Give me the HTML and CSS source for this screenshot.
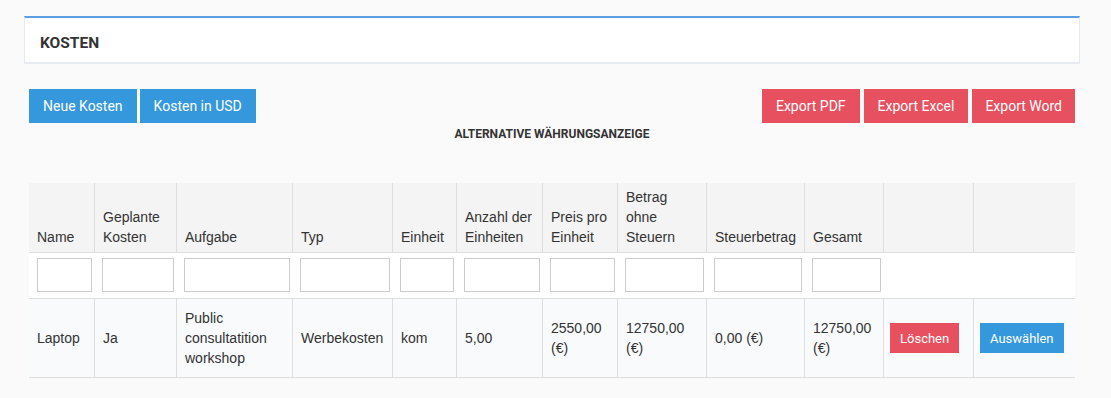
FILE: index.html
```html
<!DOCTYPE html>
<html lang="de">
<head>
<meta charset="utf-8">
<title>Kosten</title>
<link rel="stylesheet" href="styles.css">
</head>
<body>
<div class="page">
  <div class="card">
    <h2 class="card-title">KOSTEN</h2>
  </div>
  <div class="content">
    <div class="toolbar">
      <div class="btn-group">
        <button class="btn btn-blue">Neue Kosten</button>
        <button class="btn btn-blue">Kosten in USD</button>
      </div>
      <div class="btn-group btn-group-right">
        <button class="btn btn-red">Export PDF</button>
        <button class="btn btn-red">Export Excel</button>
        <button class="btn btn-red btn-narrow">Export Word</button>
      </div>
    </div>
    <div class="alt-label">ALTERNATIVE WÄHRUNGSANZEIGE</div>
    <table class="grid">
      <colgroup>
        <col class="c1"><col class="c2"><col class="c3"><col class="c4"><col class="c5"><col class="c6">
        <col class="c7"><col class="c8"><col class="c9"><col class="c10"><col class="c11"><col class="c12">
      </colgroup>
      <thead>
        <tr class="head-row">
          <th>Name</th>
          <th>Geplante Kosten</th>
          <th>Aufgabe</th>
          <th>Typ</th>
          <th>Einheit</th>
          <th>Anzahl der Einheiten</th>
          <th>Preis pro Einheit</th>
          <th>Betrag ohne Steuern</th>
          <th>Steuerbetrag</th>
          <th>Gesamt</th>
          <th></th>
          <th></th>
        </tr>
        <tr class="filter-row">
          <td><input type="text"></td>
          <td><input type="text"></td>
          <td><input type="text"></td>
          <td><input type="text"></td>
          <td><input type="text"></td>
          <td><input type="text"></td>
          <td><input type="text"></td>
          <td><input type="text"></td>
          <td><input type="text"></td>
          <td><input type="text"></td>
          <td></td>
          <td></td>
        </tr>
      </thead>
      <tbody>
        <tr class="data-row">
          <td>Laptop</td>
          <td>Ja</td>
          <td>Public consultatition workshop</td>
          <td>Werbekosten</td>
          <td>kom</td>
          <td>5,00</td>
          <td>2550,00 (€)</td>
          <td>12750,00 (€)</td>
          <td>0,00 (€)</td>
          <td>12750,00 (€)</td>
          <td><button class="btn-sm btn-red">Löschen</button></td>
          <td><button class="btn-sm btn-blue">Auswählen</button></td>
        </tr>
      </tbody>
    </table>
  </div>
</div>
</body>
</html>
```

FILE: styles.css
```css
html, body {
  margin: 0;
  padding: 0;
  background: #fafafa;
}

body {
  font-family: Roboto, "Liberation Sans", Arial, sans-serif;
  color: #333;
}

.page {
  padding: 16px 31px 20px 24px;
}

.card {
  background: #fff;
  border-top: 2px solid #5f9de2;
  border-left: 1px solid #e6eaee;
  border-right: 1px solid #e6eaee;
  border-bottom: 2px solid #e8ecf0;
  height: 44px;
  box-sizing: content-box;
  display: flex;
  align-items: flex-start;
  padding: 0 15px;
}

.card-title {
  margin: 0;
  padding-top: 16px;
  font-size: 15.5px;
  line-height: 18px;
  font-weight: 700;
  color: #333;
}

.content {
  padding: 25px 5px 0 5px;
}

.toolbar {
  display: flex;
  justify-content: space-between;
}

.btn-group {
  display: flex;
  gap: 3px;
}

.btn-group-right {
  gap: 4px;
}

.btn {
  height: 34px;
  border: 0;
  padding: 0 14px;
  font-family: Roboto, "Liberation Sans", Arial, sans-serif;
  font-size: 14px;
  color: #fff;
  cursor: pointer;
}

.btn-narrow {
  padding: 0 13px;
}

.btn-blue {
  background: #3598dc;
}

.btn-red {
  background: #e7505e;
}

.alt-label {
  text-align: center;
  font-size: 12px;
  font-weight: 700;
  line-height: 14px;
  margin-top: 4px;
  color: #333;
}

.grid {
  margin-top: 42px;
  width: 100%;
  table-layout: fixed;
  border-collapse: separate;
  border-spacing: 0;
  font-family: "Liberation Sans", Arial, sans-serif;
  font-size: 14px;
  line-height: 20px;
  color: #333;
}

.c1 { width: 65px; }
.c2 { width: 82px; }
.c3 { width: 116px; }
.c4 { width: 100px; }
.c5 { width: 64px; }
.c6 { width: 86px; }
.c7 { width: 75px; }
.c8 { width: 89px; }
.c9 { width: 98px; }
.c10 { width: 79px; }
.c11 { width: 90px; }
.c12 { width: 102px; }

.head-row th {
  background: #f4f4f4;
  font-weight: 400;
  text-align: left;
  vertical-align: bottom;
  padding: 4px 4px 5px 8px;
  border-left: 1px solid #dedede;
  border-bottom: 1px solid #dedede;
}

.head-row th:first-child,
.data-row td:first-child {
  border-left: 0;
}

.filter-row td {
  background: #fff;
  padding: 5px 2px 6px 8px;
  border-bottom: 1px solid #dedede;
  height: 34px;
}

.filter-row input {
  display: block;
  width: 100%;
  height: 34px;
  box-sizing: border-box;
  border: 1px solid #cccccc;
  background: #fff;
  margin: 0;
  padding: 0 6px;
}

.data-row td {
  background: #f9fafc;
  padding: 9px 4px 9px 8px;
  vertical-align: middle;
  border-left: 1px solid #dedede;
  border-bottom: 1px solid #dedede;
}

.data-row td:nth-child(11),
.data-row td:nth-child(12) {
  padding-left: 6px;
}

.btn-sm {
  height: 30px;
  border: 0;
  padding: 0 10px;
  font-family: Roboto, "Liberation Sans", Arial, sans-serif;
  font-size: 13px;
  color: #fff;
  cursor: pointer;
}
```
